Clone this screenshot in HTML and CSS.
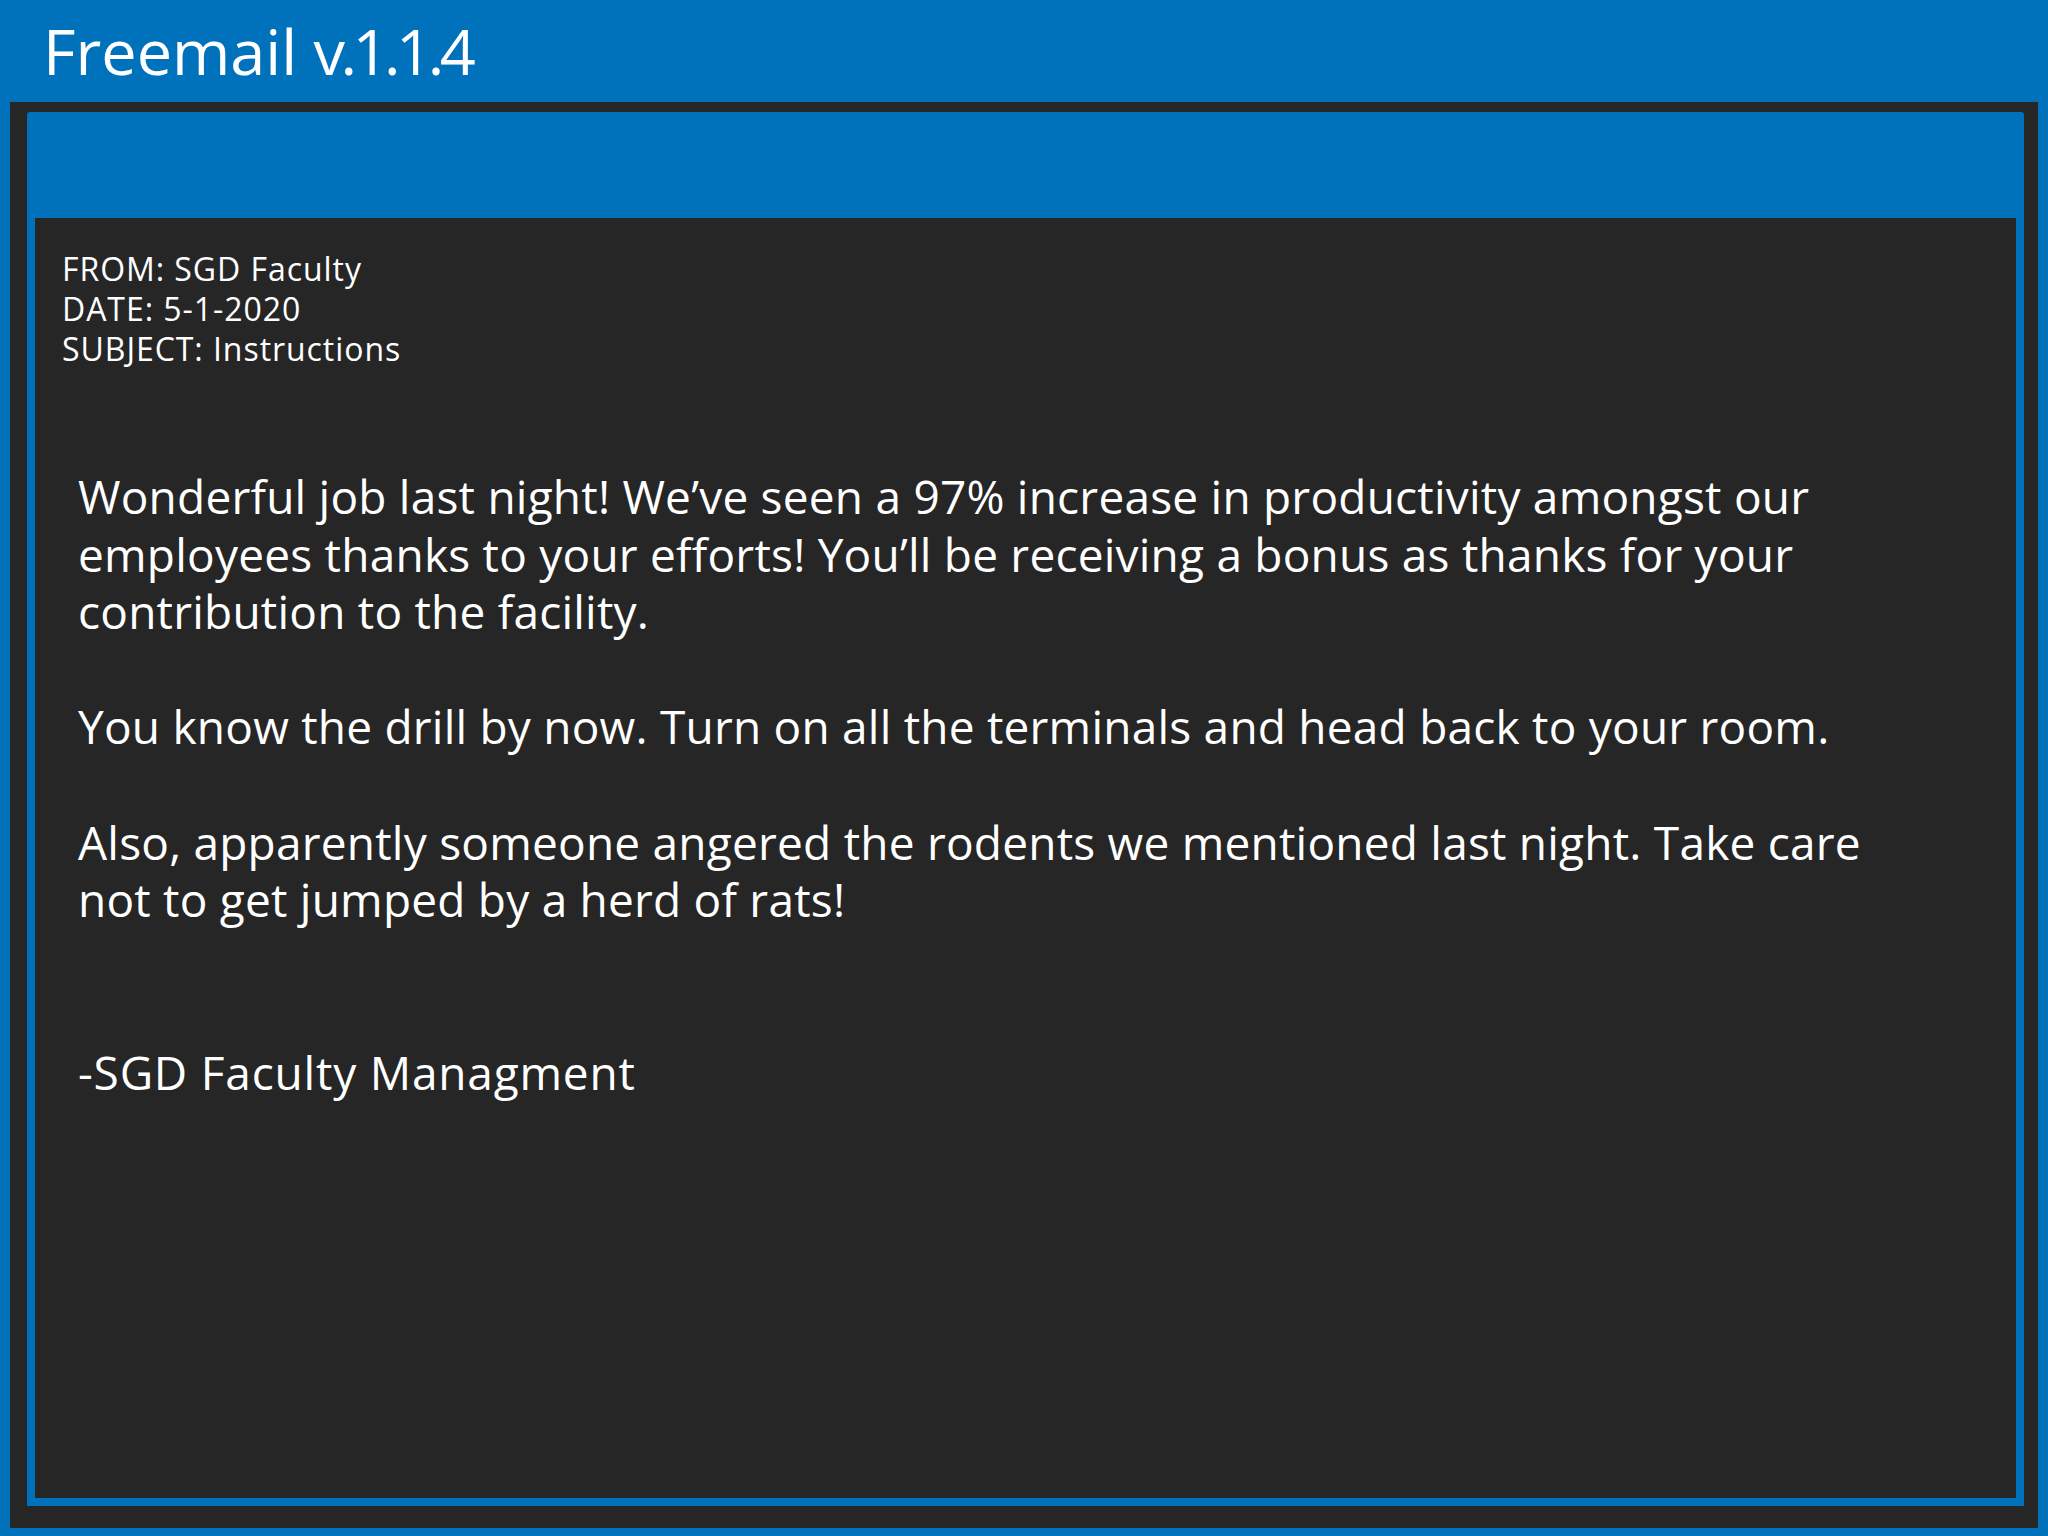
FILE: index.html
```html
<!DOCTYPE html>
<html lang="en">
<head>
<meta charset="utf-8">
<title>Freemail v.1.1.4</title>
<link rel="stylesheet" href="styles.css">
</head>
<body>
<header class="app-bar">
  <h1 class="app-title">Freemail <span class="ver">v.1.1.4</span></h1>
</header>
<main class="frame">
  <section class="window">
    <div class="window-bar"></div>
    <div class="message">
      <div class="meta">
        <div>FROM: SGD Faculty</div>
        <div>DATE: 5-1-2020</div>
        <div>SUBJECT: Instructions</div>
      </div>
      <div class="body">
        <p>Wonderful job last night! We’ve seen a 97% increase in productivity amongst our<br>employees thanks to your efforts! You’ll be receiving a bonus as thanks for your<br>contribution to the facility.</p>
        <p>You know the drill by now. Turn on all the terminals and head back to your room.</p>
        <p>Also, apparently someone angered the rodents we mentioned last night. Take care<br>not to get jumped by a herd of rats!</p>
        <p class="sign">-SGD Faculty Managment</p>
      </div>
    </div>
  </section>
</main>
</body>
</html>
```
FILE: styles.css
```css
html, body {
  margin: 0;
  padding: 0;
}
body {
  width: 2048px;
  height: 1536px;
  background: #0072bc;
  font-family: "Open Sans", "Noto Sans", sans-serif;
  color: #ffffff;
  display: flex;
  flex-direction: column;
  overflow: hidden;
}
.app-bar {
  height: 102px;
  box-sizing: border-box;
  padding: 8px 0 0 43px;
}
.app-title {
  margin: 0;
  font-size: 63px;
  font-weight: 400;
  line-height: 86px;
  white-space: nowrap;
}
.ver {
  letter-spacing: -4.5px;
}
.frame {
  flex: 1;
  margin: 0 10px 8px 10px;
  background: #262626;
  padding: 10px 14px 22px 17px;
  display: flex;
  flex-direction: column;
}
.window {
  flex: 1;
  background: #0072bc;
  border-radius: 3px 3px 0 0;
  display: flex;
  flex-direction: column;
  padding: 0 8px 8px 8px;
}
.window-bar {
  height: 106px;
}
.message {
  flex: 1;
  background: #262626;
  padding: 31px 0 0 27px;
}
.meta {
  font-size: 32px;
  line-height: 40px;
  letter-spacing: 0.95px;
}
.body {
  margin: 99px 0 0 16px;
  font-size: 46px;
  line-height: 57.6px;
  letter-spacing: 0.22px;
  white-space: nowrap;
}
.body p {
  margin: 0 0 57.6px 0;
}
.body .sign {
  margin-top: 115.2px;
  letter-spacing: 0.8px;
}
```
